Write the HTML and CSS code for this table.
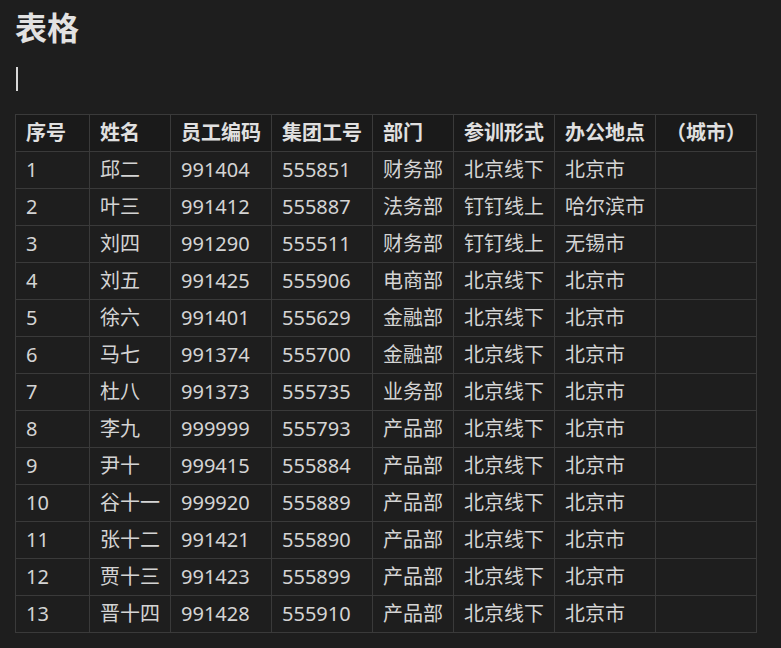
FILE: index.html
```html
<!DOCTYPE html>
<html lang="zh">
<head>
<meta charset="utf-8">
<link rel="stylesheet" href="styles.css">
</head>
<body>
<h1 class="title">表格</h1>
<div class="cursor-line"><span class="cursor"></span></div>
<table class="grid">
<colgroup>
<col class="c1"><col class="c2"><col class="c3"><col class="c4"><col class="c5"><col class="c6"><col class="c7"><col class="c8">
</colgroup>
<thead>
<tr><th>序号</th><th>姓名</th><th>员工编码</th><th>集团工号</th><th>部门</th><th>参训形式</th><th>办公地点</th><th class="paren">（城市）</th></tr>
</thead>
<tbody>
<tr><td>1</td><td>邱二</td><td>991404</td><td>555851</td><td>财务部</td><td>北京线下</td><td>北京市</td><td></td></tr>
<tr><td>2</td><td>叶三</td><td>991412</td><td>555887</td><td>法务部</td><td>钉钉线上</td><td>哈尔滨市</td><td></td></tr>
<tr><td>3</td><td>刘四</td><td>991290</td><td>555511</td><td>财务部</td><td>钉钉线上</td><td>无锡市</td><td></td></tr>
<tr><td>4</td><td>刘五</td><td>991425</td><td>555906</td><td>电商部</td><td>北京线下</td><td>北京市</td><td></td></tr>
<tr><td>5</td><td>徐六</td><td>991401</td><td>555629</td><td>金融部</td><td>北京线下</td><td>北京市</td><td></td></tr>
<tr><td>6</td><td>马七</td><td>991374</td><td>555700</td><td>金融部</td><td>北京线下</td><td>北京市</td><td></td></tr>
<tr><td>7</td><td>杜八</td><td>991373</td><td>555735</td><td>业务部</td><td>北京线下</td><td>北京市</td><td></td></tr>
<tr><td>8</td><td>李九</td><td>999999</td><td>555793</td><td>产品部</td><td>北京线下</td><td>北京市</td><td></td></tr>
<tr><td>9</td><td>尹十</td><td>999415</td><td>555884</td><td>产品部</td><td>北京线下</td><td>北京市</td><td></td></tr>
<tr><td>10</td><td>谷十一</td><td>999920</td><td>555889</td><td>产品部</td><td>北京线下</td><td>北京市</td><td></td></tr>
<tr><td>11</td><td>张十二</td><td>991421</td><td>555890</td><td>产品部</td><td>北京线下</td><td>北京市</td><td></td></tr>
<tr><td>12</td><td>贾十三</td><td>991423</td><td>555899</td><td>产品部</td><td>北京线下</td><td>北京市</td><td></td></tr>
<tr><td>13</td><td>晋十四</td><td>991428</td><td>555910</td><td>产品部</td><td>北京线下</td><td>北京市</td><td></td></tr>
</tbody>
</table>
</body>
</html>
```

FILE: styles.css
```css
html, body {
  margin: 0;
  padding: 0;
  background: #1e1e1e;
}
body {
  padding: 0 15px;
  font-family: "Noto Sans", "Noto Sans CJK SC", sans-serif;
  color: #d4d4d4;
}
.title {
  margin: 0;
  padding-top: 6px;
  font-size: 32px;
  line-height: 44px;
  font-weight: 700;
  color: #e2e2e2;
}
.cursor-line {
  height: 64px;
  padding-top: 17px;
  box-sizing: border-box;
}
.cursor {
  display: block;
  width: 2px;
  height: 24px;
  margin-left: 1px;
  background: #d8d8d8;
}
.grid {
  border-collapse: collapse;
  table-layout: fixed;
  width: 742px;
  font-size: 20px;
}
.c1 { width: 74px; }
.c2 { width: 81px; }
.c3 { width: 101px; }
.c4 { width: 101px; }
.c5 { width: 81px; }
.c6 { width: 101px; }
.c7 { width: 101px; }
.c8 { width: 101px; }
.grid th, .grid td {
  border: 1px solid #3a3a3a;
  height: 36px;
  padding: 0 10px;
  text-align: left;
  line-height: 36px;
  white-space: nowrap;
  box-sizing: border-box;
}
.grid th {
  background: #1a1a1a;
  font-weight: 700;
  color: #e0e0e0;
  font-size: 20px;
}
.grid td {
  background: #1e1e1e;
}
.grid th.paren {
  text-align: left;
}
```
